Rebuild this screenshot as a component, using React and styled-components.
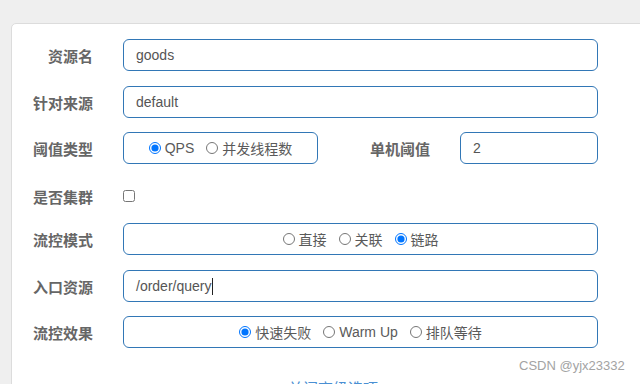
import React from "react";
import styled, { createGlobalStyle } from "styled-components";

const Global = createGlobalStyle`
  html, body {
    margin: 0;
    padding: 0;
    background: #efefef;
    overflow: hidden;
  }
  body {
    font-family: "Liberation Sans", "Noto Sans CJK SC", sans-serif;
    height: 384px;
  }
`

const Pagina = styled.div`
  position: relative;
  width: 640px;
  height: 384px;
  overflow: hidden;
  padding: 23px 0 0 11px;
  box-sizing: border-box;
`

const Tarjeta = styled.div`
  width: 680px;
  height: 420px;
  background: #fff;
  border: 1px solid #dcdcdc;
  border-radius: 5px;
  padding-top: 15px;
  box-sizing: border-box;
`

const Fila = styled.div`
  display: flex;
  align-items: center;
  height: ${(p) => p.$alto || 32}px;
  margin-bottom: ${(p) => (p.$abajo !== undefined ? p.$abajo : 14)}px;
`

const Etiqueta = styled.label`
  width: ${(p) => p.$ancho || 81}px;
  margin-right: 30px;
  text-align: right;
  font-family: "Liberation Sans", "Noto Sans CJK SC", sans-serif;
  font-weight: 700;
  font-size: 15px;
  color: #666;
  flex-shrink: 0;
`

const Campo = styled.input`
  width: ${(p) => p.$ancho || 475}px;
  height: 32px;
  box-sizing: border-box;
  border: 1px solid #3277b6;
  border-radius: 6px;
  padding: 0 12px;
  font-family: "Liberation Sans", "Noto Sans CJK SC", sans-serif;
  font-size: 14px;
  color: #555;
  outline: none;
  background: #fff;
`

const CampoActivo = styled.div`
  width: 475px;
  height: 32px;
  box-sizing: border-box;
  border: 1px solid #3277b6;
  border-radius: 6px;
  padding: 0 12px;
  display: flex;
  align-items: center;
  font-size: 14px;
  color: #555;
`

const Cursor = styled.span`
  display: inline-block;
  width: 1px;
  height: 17px;
  background: #222;
  margin-left: 1px;
`

const CajaRadios = styled.div`
  width: ${(p) => p.$ancho || 475}px;
  height: 32px;
  box-sizing: border-box;
  border: 1px solid #3277b6;
  border-radius: 6px;
  display: flex;
  align-items: center;
  justify-content: center;
  gap: 12px;
  flex-shrink: 0;
`

const Opcion = styled.label`
  display: flex;
  align-items: center;
  gap: 4px;
  font-family: "Liberation Sans", "Noto Sans CJK SC", sans-serif;
  font-size: 14px;
  color: #5a5a5a;

  input {
    margin: 0;
    width: 12px;
    height: 12px;
  }
`

const Casilla = styled.input`
  margin: 0;
  width: 12px;
  height: 12px;
`

const Enlace = styled.a`
  display: block;
  margin: 29px 0 0 276px;
  font-family: "Liberation Sans", "Noto Sans CJK SC", sans-serif;
  font-size: 15px;
  color: #4a8fd3;
  text-decoration: none;
`

const MarcaAgua = styled.div`
  position: absolute;
  left: 519px;
  top: 358px;
  font-family: "Liberation Sans", sans-serif;
  font-size: 13px;
  color: #a3a3a3;
`

const Radios = ({nombre, opciones, elegido, ancho}) => (
  <CajaRadios $ancho={ancho}>
    {opciones.map((o) => (
      <Opcion key={o}>
        <input type="radio" name={nombre} defaultChecked={o === elegido} />
        {o}
      </Opcion>
    ))}
  </CajaRadios>
)

const App = () => {
  return (
    <Pagina>
      <Global />
      <Tarjeta>
        <Fila $abajo={15}>
          <Etiqueta>资源名</Etiqueta>
          <Campo type="text" defaultValue="goods" readOnly />
        </Fila>

        <Fila>
          <Etiqueta>针对来源</Etiqueta>
          <Campo type="text" defaultValue="default" readOnly />
        </Fila>

        <Fila>
          <Etiqueta>阈值类型</Etiqueta>
          <Radios nombre="tipo" opciones={["QPS", "并发线程数"]} elegido="QPS" ancho={195} />
          <Etiqueta $ancho={112}>单机阈值</Etiqueta>
          <Campo type="text" defaultValue="2" readOnly $ancho={138} />
        </Fila>

        <Fila $alto={36} $abajo={9}>
          <Etiqueta>是否集群</Etiqueta>
          <Casilla type="checkbox" />
        </Fila>

        <Fila $abajo={15}>
          <Etiqueta>流控模式</Etiqueta>
          <Radios nombre="modo" opciones={["直接", "关联", "链路"]} elegido="链路" />
        </Fila>

        <Fila>
          <Etiqueta>入口资源</Etiqueta>
          <CampoActivo>/order/query<Cursor /></CampoActivo>
        </Fila>

        <Fila $abajo={0}>
          <Etiqueta>流控效果</Etiqueta>
          <Radios nombre="efecto" opciones={["快速失败", "Warm Up", "排队等待"]} elegido="快速失败" />
        </Fila>

        <Enlace href="#">关闭高级选项</Enlace>
      </Tarjeta>
      <MarcaAgua>CSDN @yjx23332</MarcaAgua>
    </Pagina>
  );
}

export default App;
